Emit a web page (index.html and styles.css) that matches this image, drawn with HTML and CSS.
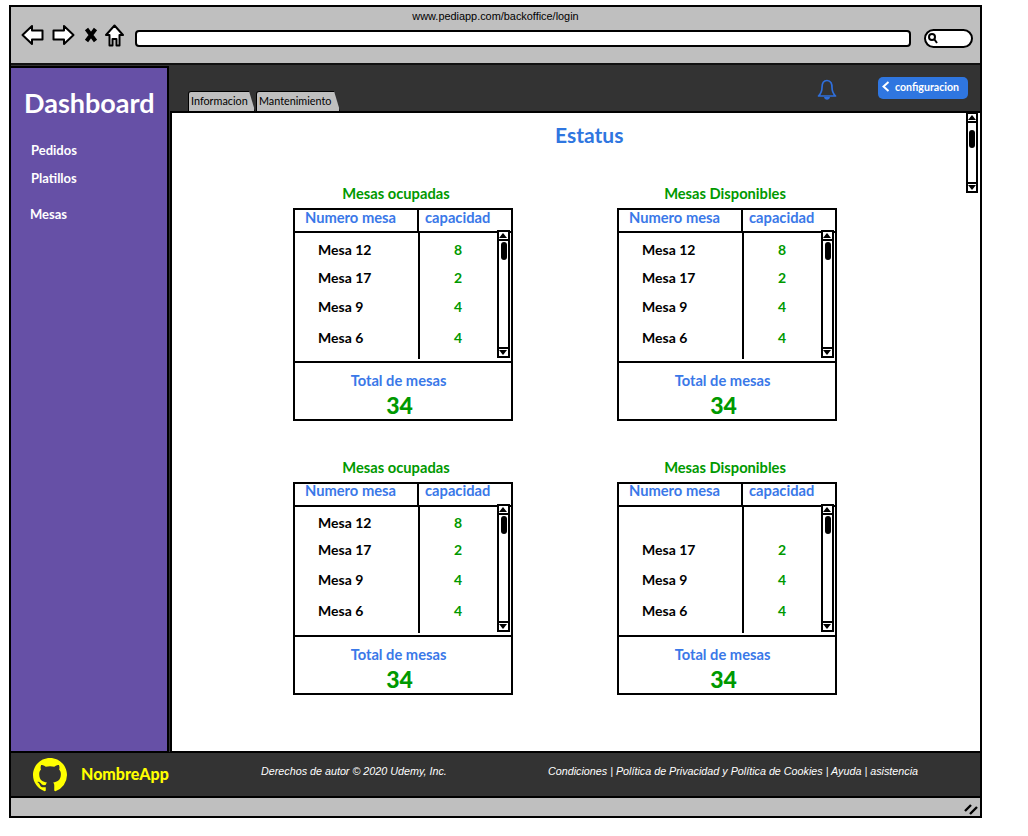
FILE: index.html
```html
<!DOCTYPE html>
<html lang="en">
<head>
    <meta charset="UTF-8">
    <meta name="viewport" content="width=device-width, initial-scale=1.0">
    <title>Dashboard</title>
    <link rel="stylesheet" href="styles.css">
</head>
<body>
    <div class="window">
        <div class="chrome">
            <p class="url-text">www.pediapp.com/backoffice/login</p>
            <div class="chrome-row">
                <svg class="nav-icon" width="23" height="22" viewBox="0 0 23 22"><path d="M1.5 11 L11 2 V6.5 H21.5 V15.5 H11 V20 Z" fill="#fff" stroke="#000" stroke-width="2" stroke-linejoin="round"/></svg>
                <svg class="nav-icon" width="23" height="22" viewBox="0 0 23 22"><path d="M21.5 11 L12 2 V6.5 H1.5 V15.5 H12 V20 Z" fill="#fff" stroke="#000" stroke-width="2" stroke-linejoin="round"/></svg>
                <svg class="nav-icon nav-x" width="14" height="16" viewBox="0 0 14 16"><path d="M2.5 2 L11.5 14 M11.5 2 L2.5 14" fill="none" stroke="#000" stroke-width="4"/></svg>
                <svg class="nav-icon" width="19" height="23" viewBox="0 0 19 23"><path d="M9.5 1.5 L18 11 H14.5 V21.5 H11.5 V15 H7.5 V21.5 H4.5 V11 H1 Z" fill="#fff" stroke="#000" stroke-width="2" stroke-linejoin="round"/></svg>
                <div class="url-bar"></div>
                <div class="search-box">
                    <svg width="12" height="12" viewBox="0 0 12 12"><circle cx="5" cy="5" r="3" fill="none" stroke="#000" stroke-width="2"/><path d="M7.5 7.5 L10 11" stroke="#000" stroke-width="2"/></svg>
                </div>
            </div>
        </div>
        <div class="app">
            <nav class="sidebar">
                <h1>Dashboard</h1>
                <a class="side-link">Pedidos</a>
                <a class="side-link">Platillos</a>
                <a class="side-link side-link-last">Mesas</a>
            </nav>
            <div class="main">
                <div class="topbar">
                    <div class="tabs">
                        <span class="tab tab-first">Informacion</span>
                        <span class="tab tab-second">Mantenimiento</span>
                    </div>
                    <svg class="bell" width="20" height="22" viewBox="0 0 20 22"><path d="M10 1.5 C6 1.5 5 5 5 8.5 C5 12.5 3.5 15 1.5 17 H18.5 C16.5 15 15 12.5 15 8.5 C15 5 14 1.5 10 1.5 Z" fill="none" stroke="#2f6fdc" stroke-width="1.7" stroke-linejoin="round"/><path d="M7 18 C7.5 21.5 12.5 21.5 13 18 Z" fill="#2f6fdc"/></svg>
                    <button class="config-btn">
                        <svg width="8" height="11" viewBox="0 0 8 11"><path d="M6.5 1 L1.5 5.5 L6.5 10" fill="none" stroke="#fff" stroke-width="2"/></svg>
                        configuracion
                    </button>
                </div>
                <div class="content">
                    <h2>Estatus</h2>
                    <div class="scrollbar page-scroll"><span class="sb-up"></span><span class="sb-track"><i></i></span><span class="sb-down"></span></div>
                    <div class="grid">
                        <section>
                            <h3>Mesas ocupadas</h3>
                            <div class="card">
                                <div class="card-head"><span class="head-name">Numero mesa</span><span class="head-cap">capacidad</span></div>
                                <div class="card-body">
                                    <div class="row"><span class="name">Mesa 12</span><span class="cap">8</span></div>
                                    <div class="row"><span class="name">Mesa 17</span><span class="cap">2</span></div>
                                    <div class="row"><span class="name">Mesa 9</span><span class="cap">4</span></div>
                                    <div class="row"><span class="name">Mesa 6</span><span class="cap">4</span></div>
                                </div>
                                <div class="card-foot"><span class="total-label">Total de mesas</span><span class="total">34</span></div>
                                <div class="scrollbar card-scroll"><span class="sb-up"></span><span class="sb-track"><i></i></span><span class="sb-down"></span></div>
                            </div>
                        </section>
                        <section>
                            <h3>Mesas Disponibles</h3>
                            <div class="card">
                                <div class="card-head"><span class="head-name">Numero mesa</span><span class="head-cap">capacidad</span></div>
                                <div class="card-body">
                                    <div class="row"><span class="name">Mesa 12</span><span class="cap">8</span></div>
                                    <div class="row"><span class="name">Mesa 17</span><span class="cap">2</span></div>
                                    <div class="row"><span class="name">Mesa 9</span><span class="cap">4</span></div>
                                    <div class="row"><span class="name">Mesa 6</span><span class="cap">4</span></div>
                                </div>
                                <div class="card-foot"><span class="total-label">Total de mesas</span><span class="total">34</span></div>
                                <div class="scrollbar card-scroll"><span class="sb-up"></span><span class="sb-track"><i></i></span><span class="sb-down"></span></div>
                            </div>
                        </section>
                        <section>
                            <h3>Mesas ocupadas</h3>
                            <div class="card card-low">
                                <div class="card-head"><span class="head-name">Numero mesa</span><span class="head-cap">capacidad</span></div>
                                <div class="card-body">
                                    <div class="row"><span class="name">Mesa 12</span><span class="cap">8</span></div>
                                    <div class="row"><span class="name">Mesa 17</span><span class="cap">2</span></div>
                                    <div class="row"><span class="name">Mesa 9</span><span class="cap">4</span></div>
                                    <div class="row"><span class="name">Mesa 6</span><span class="cap">4</span></div>
                                </div>
                                <div class="card-foot"><span class="total-label">Total de mesas</span><span class="total">34</span></div>
                                <div class="scrollbar card-scroll"><span class="sb-up"></span><span class="sb-track"><i></i></span><span class="sb-down"></span></div>
                            </div>
                        </section>
                        <section>
                            <h3>Mesas Disponibles</h3>
                            <div class="card card-low">
                                <div class="card-head"><span class="head-name">Numero mesa</span><span class="head-cap">capacidad</span></div>
                                <div class="card-body">
                                    <div class="row"></div>
                                    <div class="row"><span class="name">Mesa 17</span><span class="cap">2</span></div>
                                    <div class="row"><span class="name">Mesa 9</span><span class="cap">4</span></div>
                                    <div class="row"><span class="name">Mesa 6</span><span class="cap">4</span></div>
                                </div>
                                <div class="card-foot"><span class="total-label">Total de mesas</span><span class="total">34</span></div>
                                <div class="scrollbar card-scroll"><span class="sb-up"></span><span class="sb-track"><i></i></span><span class="sb-down"></span></div>
                            </div>
                        </section>
                    </div>
                </div>
            </div>
        </div>
        <footer class="footer">
            <svg class="github" width="34" height="34" viewBox="0 0 16 16"><path fill="#ffff00" d="M8 0C3.58 0 0 3.58 0 8c0 3.54 2.29 6.53 5.47 7.59.4.07.55-.17.55-.38 0-.19-.01-.82-.01-1.49-2.01.37-2.53-.49-2.69-.94-.09-.23-.48-.94-.82-1.13-.28-.15-.68-.52-.01-.53.63-.01 1.08.58 1.23.82.72 1.21 1.87.87 2.33.66.07-.52.28-.87.51-1.07-1.78-.2-3.64-.89-3.64-3.95 0-.87.31-1.59.82-2.15-.08-.2-.36-1.02.08-2.12 0 0 .67-.21 2.2.82.64-.18 1.32-.27 2-.27s1.36.09 2 .27c1.53-1.04 2.2-.82 2.2-.82.44 1.1.16 1.92.08 2.12.51.56.82 1.27.82 2.15 0 3.07-1.87 3.75-3.65 3.95.29.25.54.73.54 1.48 0 1.07-.01 1.93-.01 2.2 0 .21.15.46.55.38A8.01 8.01 0 0 0 16 8c0-4.42-3.58-8-8-8z"/></svg>
            <span class="brand">NombreApp</span>
            <span class="copy">Derechos de autor © 2020 Udemy, Inc.</span>
            <span class="legal">Condiciones | Política de Privacidad y Política de Cookies | Ayuda | asistencia</span>
        </footer>
        <div class="status">
            <svg width="14" height="12" viewBox="0 0 14 12"><path d="M1 8 L7 2 M6 11 L13 4" stroke="#000" stroke-width="2.4" fill="none"/></svg>
        </div>
    </div>
</body>
</html>
```

FILE: styles.css
```css
* {
    box-sizing: border-box;
    margin: 0;
    padding: 0;
}
body {
    width: 1028px;
    height: 836px;
    padding: 5px 0 0 9px;
    background: #fff;
    font-family: Lato, "Liberation Sans", sans-serif;
    overflow: hidden;
}
.window {
    width: 973px;
    height: 813px;
    border: 2px solid #000;
    display: flex;
    flex-direction: column;
}

/* browser chrome */
.chrome {
    height: 58px;
    background: #bfbfbf;
    border-bottom: 2px solid #111;
}
.url-text {
    text-align: center;
    font-family: "Liberation Sans", sans-serif;
    font-size: 10.9px;
    line-height: 13px;
    padding-top: 3px;
    color: #000;
}
.chrome-row {
    display: flex;
    align-items: center;
    padding: 0 7px 0 10px;
    height: 24px;
}
.nav-icon {
    flex: none;
    margin-right: 8px;
}
.nav-x {
    margin-left: 1px;
    margin-right: 7px;
}
.url-bar {
    flex: 1;
    height: 17px;
    background: #fff;
    border: 2px solid #000;
    border-radius: 4px;
    margin: 6px 13px 0 3px;
}
.search-box {
    width: 49px;
    height: 19px;
    background: #fff;
    border: 2px solid #000;
    border-radius: 10px;
    margin-top: 6px;
    display: flex;
    align-items: center;
    padding-left: 1px;
}

/* app */
.app {
    height: 687px;
    display: flex;
    background: #333;
}
.sidebar {
    width: 158px;
    margin-top: 1px;
    background: #6650a6;
    border-top: 2px solid #000;
    border-right: 2px solid #000;
    border-bottom: 1px solid #000;
    padding: 19px 0 0 13px;
}
.sidebar h1 {
    color: #fff;
    font-size: 27px;
    line-height: 32px;
    font-weight: 700;
    margin-bottom: 22px;
}
.side-link {
    display: block;
    color: #fff;
    font-size: 13px;
    font-weight: 700;
    line-height: 18px;
    margin: 0 0 10px 7px;
}
.side-link-last {
    margin: 18px 0 0 6px;
}
.main {
    flex: 1;
    display: flex;
    flex-direction: column;
    min-width: 0;
}
.topbar {
    height: 46px;
    display: flex;
    padding: 0 12px 0 19px;
}
.tabs {
    display: flex;
    align-items: flex-end;
    gap: 1px;
    flex: 1;
}
.tab {
    height: 20px;
    background: #bfbfbf;
    border: 1px solid #000;
    border-bottom: 0;
    border-radius: 3px 3px 0 0;
    font-size: 10.8px;
    line-height: 17px;
    color: #000;
    padding-left: 2px;
    clip-path: polygon(0 0, calc(100% - 6px) 0, 100% 100%, 0 100%);
}
.tab-first {
    width: 67px;
}
.tab-second {
    width: 84px;
}
.bell {
    margin: 14px 41px 0 0;
}
.config-btn {
    width: 90px;
    height: 22px;
    margin-top: 12px;
    border: 0;
    border-radius: 5px;
    background: #2f76e0;
    color: #fff;
    font-family: Lato, "Liberation Sans", sans-serif;
    font-size: 10.6px;
    font-weight: 700;
    display: flex;
    align-items: center;
    gap: 5px;
    padding: 0 0 3px 4px;
}

/* content */
.content {
    flex: 1;
    margin-left: 1px;
    background: #fff;
    border-top: 2px solid #000;
    border-left: 2px solid #000;
    border-bottom: 1px solid #000;
    padding: 10px 0 0 121px;
    position: relative;
}
.content h2 {
    font-size: 21px;
    line-height: 24px;
    font-weight: 700;
    color: #2f76e0;
    padding-left: 262px;
    margin-bottom: 36px;
}
.grid {
    display: grid;
    grid-template-columns: 220px 220px;
    column-gap: 104px;
    row-gap: 36px;
}
section h3 {
    height: 25px;
    padding: 1px 4px 0 0;
    font-size: 14.7px;
    line-height: 18px;
    font-weight: 700;
    color: #009900;
    text-align: center;
}
section:nth-child(odd) h3 {
    padding-right: 14px;
}
.card {
    height: 213px;
    border: 2px solid #000;
    position: relative;
    display: flex;
    flex-direction: column;
}
.card-head {
    height: 23px;
    display: grid;
    grid-template-columns: 124px 1fr;
    border-bottom: 2px solid #000;
    font-size: 14.7px;
    font-weight: 700;
    line-height: 15px;
    color: #3a78e8;
}
.head-name {
    padding-left: 10px;
    border-right: 2px solid #000;
}
.head-cap {
    padding-left: 6px;
}
.card-body {
    height: 130px;
    padding-top: 2px;
    background: linear-gradient(#000, #000) 123px 0 / 2px 126px no-repeat;
    border-bottom: 2px solid #000;
}
.row {
    display: grid;
    grid-template-columns: 124px 1fr;
    height: 28px;
    align-items: center;
    font-size: 14px;
    font-weight: 700;
}
.row:nth-child(3) {
    height: 30px;
}
.row:nth-child(4) {
    height: 32px;
}
.card-low .card-head {
    line-height: 12px;
}
.card-low .card-body {
    padding-top: 1px;
}
.card-low .row:nth-child(2) {
    height: 26px;
}
.card-low .row:nth-child(3) {
    height: 34px;
}
.card-low .row:nth-child(4) {
    height: 28px;
}
.name {
    padding-left: 23px;
    color: #000;
}
.cap {
    color: #009900;
    padding-left: 35px;
}
.card-foot {
    flex: 1;
    display: flex;
    flex-direction: column;
    align-items: center;
    padding: 8px 9px 0 0;
}
.total-label {
    font-size: 14.7px;
    line-height: 18px;
    font-weight: 700;
    color: #3a78e8;
}
.total {
    font-size: 23px;
    line-height: 26px;
    font-weight: 900;
    color: #009900;
    margin-top: 3px;
    padding-left: 2px;
}

/* scrollbars, these float over the content */
.scrollbar {
    position: absolute;
    background: #fff;
    border: 2px solid #000;
    display: flex;
    flex-direction: column;
}
.card-scroll {
    right: 1px;
    top: 20px;
    width: 13px;
    height: 128px;
}
.page-scroll {
    right: 2px;
    top: -1px;
    width: 12px;
    height: 81px;
}
.sb-up, .sb-down {
    height: 9px;
    flex: none;
    position: relative;
}
.sb-up {
    border-bottom: 2px solid #000;
}
.sb-down {
    border-top: 2px solid #000;
}
.sb-up::after, .sb-down::after {
    content: "";
    position: absolute;
    left: 0;
    border-left: 4px solid transparent;
    border-right: 4px solid transparent;
}
.sb-up::after {
    top: 1px;
    border-bottom: 5px solid #000;
}
.sb-down::after {
    top: 1px;
    border-top: 5px solid #000;
}
.sb-track {
    flex: 1;
    padding: 1px;
}
.sb-track i {
    display: block;
    width: 6px;
    height: 18px;
    background: #000;
    border-radius: 3px;
}
.card-scroll .sb-track {
    padding-left: 2px;
}
.page-scroll .sb-track {
    padding-top: 7px;
}

/* footer */
.footer {
    height: 46px;
    background: #333;
    border-top: 1px solid #000;
    border-bottom: 2px solid #000;
    display: flex;
    align-items: center;
    padding-left: 22px;
}
.github {
    flex: none;
}
.brand {
    color: #ffff00;
    font-size: 16px;
    font-weight: 900;
    margin: 0 0 3px 14px;
    width: 180px;
}
.copy, .legal {
    color: #fff;
    font-family: "Liberation Sans", sans-serif;
    font-style: italic;
    font-size: 10.75px;
    margin-bottom: 7px;
}
.copy {
    width: 287px;
}
.status {
    flex: 1;
    background: #bfbfbf;
    display: flex;
    justify-content: flex-end;
    align-items: flex-end;
    padding: 0 2px 1px 0;
}
```
